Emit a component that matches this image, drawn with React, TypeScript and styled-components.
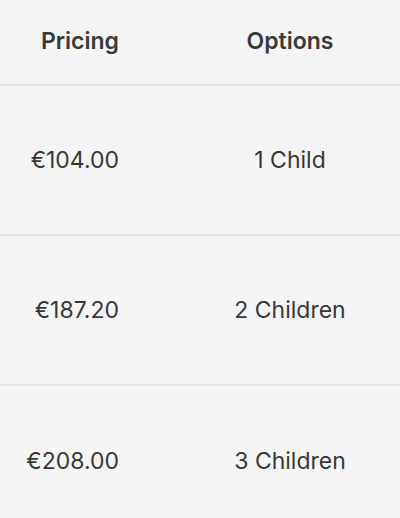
import React from "react";
import styled, { createGlobalStyle } from "styled-components";

const Global = createGlobalStyle`
  html, body { margin: 0; padding: 0; background: #f5f5f5; }
  body { font-family: Inter, "Noto Sans", sans-serif; color: #363636; }
`;

const Table = styled.div`
  display: grid;
  grid-template-columns: 180px 1fr;
  width: 400px;
  background: #f5f5f5;
`;

const Cell = styled.div<{ $col: number; $head?: boolean; $last?: boolean }>`
  display: flex;
  align-items: center;
  justify-content: ${(p) => (p.$col === 0 ? "flex-end" : "center")};
  padding-right: ${(p) => (p.$col === 0 ? "61px" : "0")};
  padding-bottom: ${(p) => (p.$head ? "3px" : "1px")};
  box-sizing: border-box;
  height: ${(p) => (p.$head ? "86px" : "150px")};
  border-bottom: ${(p) => (p.$last ? "none" : "2px solid #e4e4e4")};
  font-size: 23px;
  font-weight: ${(p) => (p.$head ? 600 : 400)};
  color: ${(p) => (p.$head ? "#3a3a3a" : "#383838")};
`;

const rows = [
  { price: "€104.00", option: "1 Child" },
  { price: "€187.20", option: "2 Children" },
  { price: "€208.00", option: "3 Children" },
];

export default function App() {
  return (
    <>
      <Global />
      <Table>
        <Cell $col={0} $head>Pricing</Cell>
        <Cell $col={1} $head>Options</Cell>
        {rows.map((r, i) => (
          <React.Fragment key={r.price}>
            <Cell $col={0} $last={i === rows.length - 1}>{r.price}</Cell>
            <Cell $col={1} $last={i === rows.length - 1}>{r.option}</Cell>
          </React.Fragment>
        ))}
      </Table>
    </>
  );
}
